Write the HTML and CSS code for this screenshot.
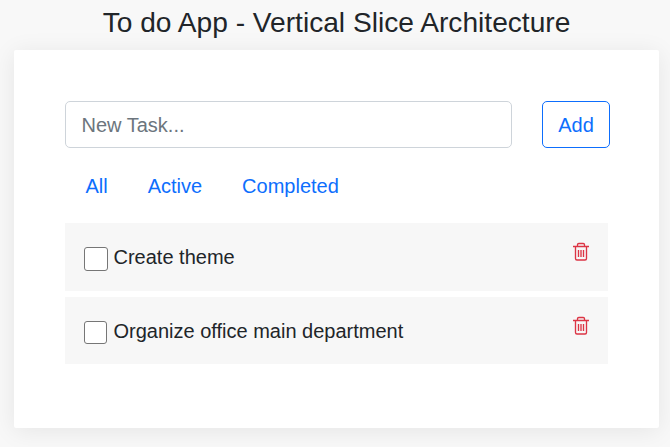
FILE: index.html
```html
<!DOCTYPE html>
<html lang="en">
<head>
<meta charset="utf-8">
<title>To do App</title>
<link rel="stylesheet" href="styles.css">
</head>
<body>
<h1 class="title"><span>To do App - Vertical Slice Architecture</span></h1>
<main class="card">
  <form class="new-task">
    <input class="task-input" type="text" placeholder="New Task...">
    <button class="add" type="button">Add</button>
  </form>
  <nav class="filters">
    <a>All</a><a>Active</a><a>Completed</a>
  </nav>
  <ul class="tasks">
    <li class="task">
      <span class="check"></span><span class="label">Create theme</span>
      <svg class="trash" viewBox="0 0 18 20"><path d="M1 4.5h16M5.5 4V2.8Q5.5 1.5 6.8 1.5h4.4q1.3 0 1.3 1.3V4M3.5 5v11.5q0 1.5 1.5 1.5h8q1.5 0 1.5-1.5V5M6.5 8V15M9 8V15M11.5 8V15"/></svg>
    </li>
    <li class="task second">
      <span class="check small"></span><span class="label">Organize office main department</span>
      <svg class="trash" viewBox="0 0 18 20"><path d="M1 4.5h16M5.5 4V2.8Q5.5 1.5 6.8 1.5h4.4q1.3 0 1.3 1.3V4M3.5 5v11.5q0 1.5 1.5 1.5h8q1.5 0 1.5-1.5V5M6.5 8V15M9 8V15M11.5 8V15"/></svg>
    </li>
  </ul>
</main>
</body>
</html>
```
FILE: styles.css
```css
* { box-sizing: border-box; }
body {
  margin: 0;
  height: 447px;
  overflow: hidden;
  background: #f8f8f8;
  color: #212529;
  font: 20px/30px "Liberation Sans", Arial, sans-serif;
}
.title {
  margin: 0;
  padding-top: 6px;
  padding-left: 3px;
  height: 50px;
  font-size: 28.15px;
  line-height: 34px;
  font-weight: 400;
  text-align: center;
  white-space: nowrap;
}
.card {
  width: 645px;
  height: 378px;
  margin-left: 14px;
  padding: 51px 51px 0;
  background: #fff;
  border-radius: 2px;
  box-shadow: 0 3px 25px rgba(0, 0, 0, 0.08);
}
.new-task {
  display: flex;
  gap: 30px;
  width: 545px;
}
.task-input {
  flex: 1;
  min-width: 0;
  height: 47px;
  padding: 1px 15px 0 15.5px;
  border: 1px solid #ced4da;
  border-radius: 5px;
  font: inherit;
}
.task-input::placeholder { color: #6c757d; opacity: 1; }
.add {
  width: 68px;
  height: 47px;
  padding: 0;
  border: 1px solid #0d6efd;
  border-radius: 5px;
  background: #fff;
  color: #0d6efd;
  font: inherit;
}
.filters {
  display: flex;
  gap: 40px;
  padding: 23px 20px 0 20.4px;
  height: 75px;
  color: #0d6efd;
}
.tasks {
  display: flex;
  flex-direction: column;
  gap: 6px;
  margin: 0;
  padding: 0;
  list-style: none;
}
.task {
  display: flex;
  align-items: flex-start;
  height: 68px;
  padding: 19px 18px 0 19px;
  background: #f7f7f7;
}
.second { height: 67px; }
.check {
  flex: none;
  width: 24px;
  height: 24px;
  margin: 5px 5.5px 0 0;
  border: 1px solid #767676;
  border-radius: 3px;
  background: #fff;
}
.small { width: 23px; height: 23px; margin-right: 6.5px; }
.label { flex: 1; }
.trash {
  width: 18px;
  height: 20px;
  fill: none;
  stroke: #dc3545;
  stroke-width: 1.35;
}
```
